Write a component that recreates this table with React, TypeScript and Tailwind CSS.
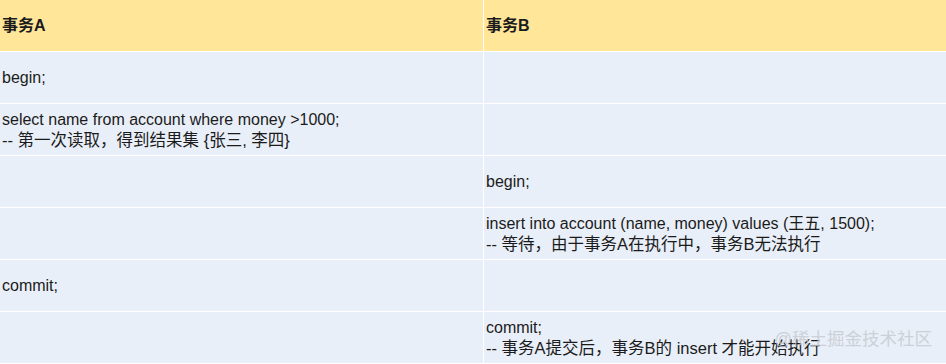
import React from 'react';

const rows: [string[], string[]][] = [
  [['begin;'], []],
  [['select name from account where money >1000;', '-- 第一次读取，得到结果集 {张三, 李四}'], []],
  [[], ['begin;']],
  [[], ['insert into account (name, money) values (王五, 1500);', '-- 等待，由于事务A在执行中，事务B无法执行']],
  [['commit;'], []],
  [[], ['commit;', '-- 事务A提交后，事务B的 insert 才能开始执行']],
];

function Cell({ lines }: { lines: string[] }) {
  return (
    <div className="bg-[#e9eff8] h-[51px] flex flex-col justify-center pl-[2px] text-[16px] leading-[20px] text-[#1b1b1b]">
      {lines.map((l, i) => (
        <div key={i} className={i === 1 ? 'whitespace-pre text-[16.5px]' : 'whitespace-pre'}>
          {l}
        </div>
      ))}
    </div>
  );
}

export default function App() {
  return (
    <div
      className="relative w-[946px] h-[364px] bg-white overflow-hidden"
      style={{ fontFamily: '"Liberation Sans", "Noto Sans CJK SC", sans-serif' }}
    >
      <div className="grid grid-cols-[483px_1fr] gap-[1px]">
        <div className="bg-[#ffe699] h-[51px] flex items-center pl-[2px] text-[16px] font-bold text-[#1b1b1b]">事务A</div>
        <div className="bg-[#ffe699] h-[51px] flex items-center pl-[2px] text-[16px] font-bold text-[#1b1b1b]">事务B</div>
        {rows.map(([a, b], i) => (
          <React.Fragment key={i}>
            <Cell lines={a} />
            <Cell lines={b} />
          </React.Fragment>
        ))}
      </div>
      <div className="absolute right-[14px] bottom-[12px] text-[17.5px] text-[#c4c8cf]/80 pointer-events-none">
        @稀土掘金技术社区
      </div>
    </div>
  );
}
